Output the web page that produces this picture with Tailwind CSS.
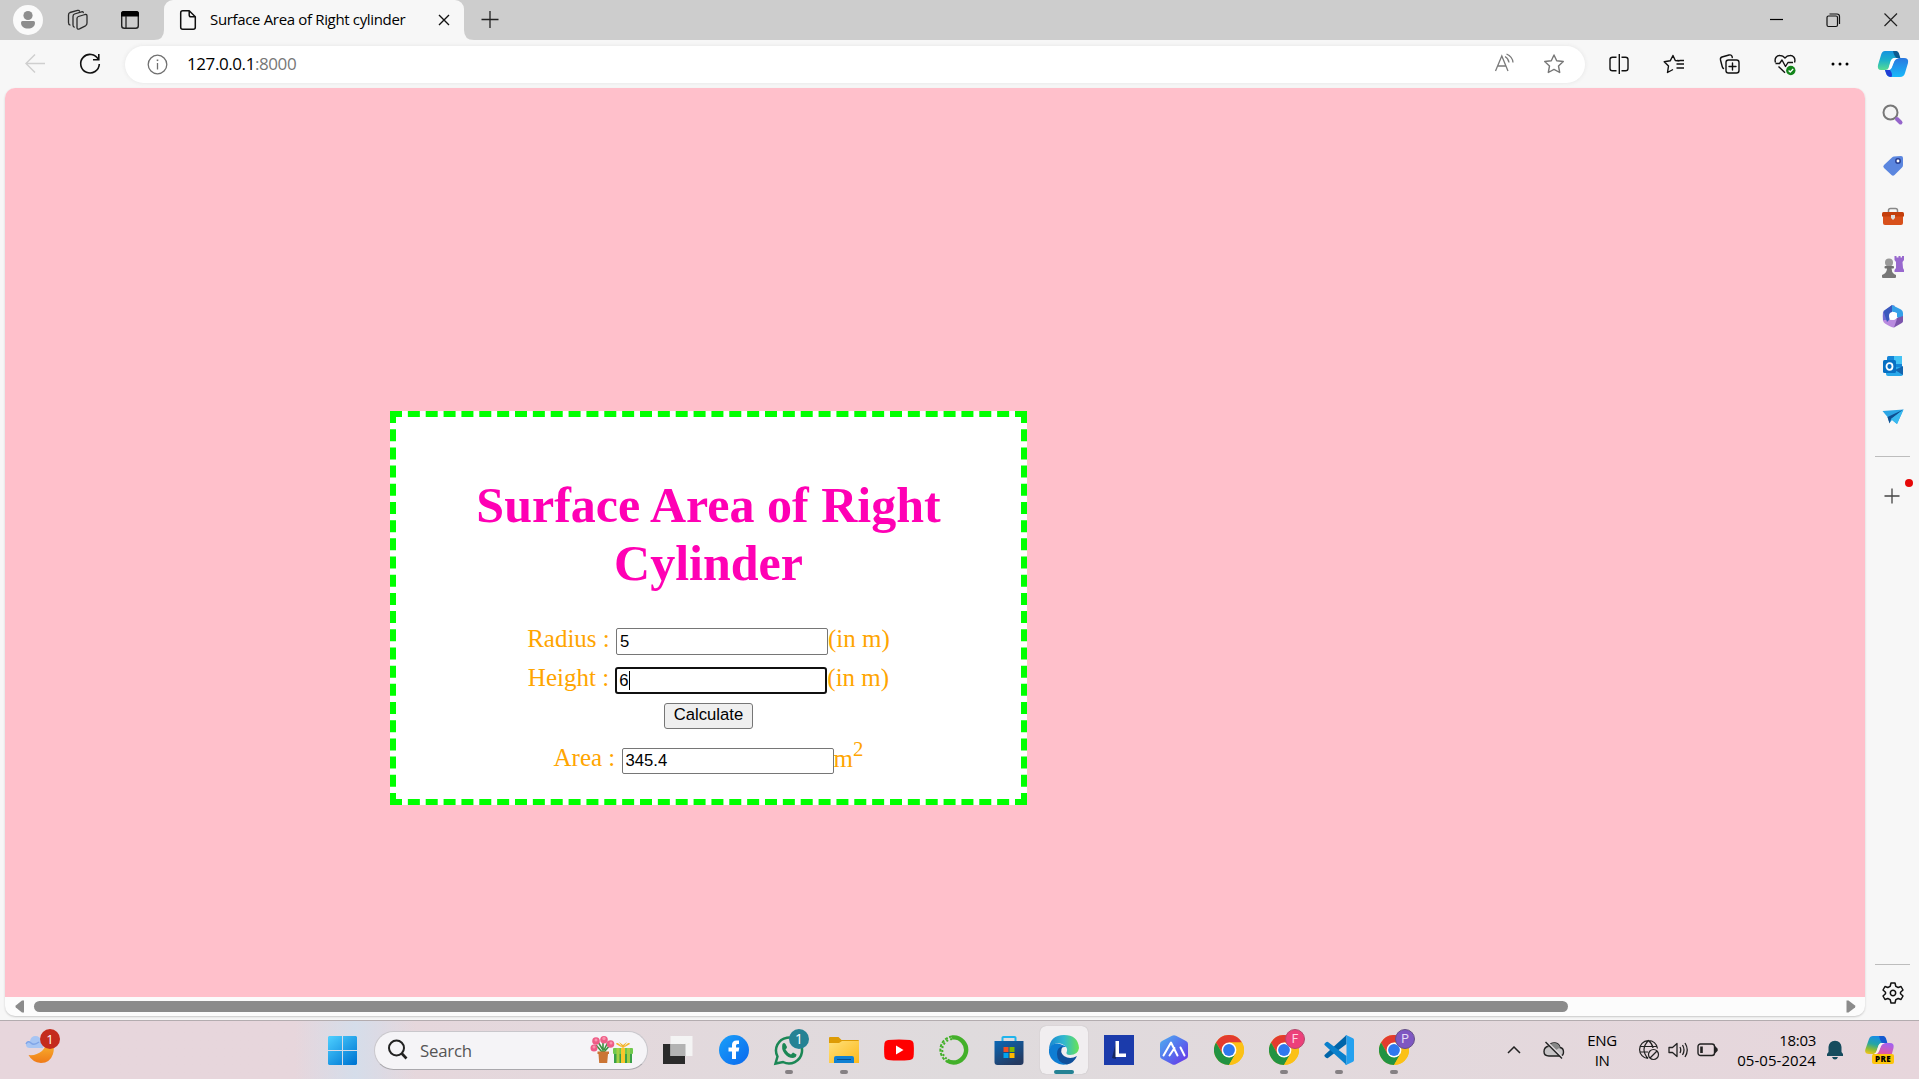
<!DOCTYPE html>
<html lang="en">
<head>
<meta charset="utf-8">
<title>Surface Area of Right cylinder</title>
<script src="https://cdn.jsdelivr.net/npm/@tailwindcss/browser@4"></script>
</head>
<body class="w-[1919px] h-[1079px] overflow-hidden flex flex-col bg-[#f7f7f7] font-['Open_Sans','Noto_Sans',sans-serif] text-black">
<svg class="absolute w-0 h-0" aria-hidden="true">
  <defs>
    <symbol id="chrome" viewBox="-15 -15 30 30">
      <circle r="15" fill="#fbc116"/>
      <path d="M-13 -7.5A15 15 0 0 1 13 -7.5H0L-6.5 3.8Z" fill="#e33b2e"/>
      <path d="M-13 -7.5A15 15 0 0 0 0 15L6.5 3.8L-6.5 3.8Z" fill="#229342"/>
      <path d="M13 -7.5H0V7.5L6.5 3.8L0 15A15 15 0 0 0 13 -7.5Z" fill="#fbc116"/>
      <circle r="7.4" fill="#fff"/><circle r="5.9" fill="#2f78ee"/>
    </symbol>
  </defs>
</svg>

<!-- Tab strip -->
<header class="h-10 shrink-0 bg-[#cdcdcd] flex items-center">
  <div class="w-14 flex justify-center"><svg width="30" height="30" viewBox="-15 -15 30 30"><circle r="15" fill="#fafafa"/><circle cy="-4.5" r="4.6" fill="#8e8e8e"/><path d="M-7 2.5Q-7 1 -5.500 1H5.500Q7 1 7 2.500C7 6.500 4 8.500 0 8.500S-7 6.500 -7 2.500Z" fill="#8e8e8e"/></svg></div>
  <div class="w-11 flex justify-center"><svg width="24" height="24" viewBox="-12 -12 24 24" fill="none" stroke="#2b2b2b" stroke-width="1.300" stroke-linejoin="round" stroke-linecap="round"><path d="M-1 -1.500Q-1 -3 .5 -3.500L7 -5.500Q9 -6 9 -4V3Q9 5 7.500 5.800L1.500 8.800Q-1 9.800 -1 7.500Z"/><path d="M-3.800 7.200Q-5 6.800 -5 5V-3.500Q-5 -5.500 -3.500 -6L3.500 -8.200Q5 -8.600 5.300 -7.500"/><path d="M-8 5Q-9.500 4.500 -9.500 2.500V-5Q-9.500 -7 -8 -7.500L-.5 -9.600Q1.200 -10 1.500 -8.800"/></svg></div>
  <div class="w-[60px] flex justify-center"><svg width="20" height="20" viewBox="-10 -10 20 20"><rect x="-8.300" y="-8.300" width="16.600" height="16.600" rx="2.500" fill="none" stroke="#222" stroke-width="1.400"/><path d="M-9 -3.500V-6.500Q-9 -9 -6.500 -9H6.500Q9 -9 9 -6.500V-3.500Z"/><path d="M-4 -4V8" stroke="#222" stroke-width="1.300"/></svg></div>
  <div class="relative ml-[4px] w-[300px] h-10 bg-[#f7f7f7] rounded-t-[9px] flex items-center">
    <svg class="absolute -left-2.5 bottom-0" width="10" height="10"><path d="M10 0V10H0Q10 10 10 0Z" fill="#f7f7f7"/></svg>
    <svg class="absolute -right-2.5 bottom-0" width="10" height="10"><path d="M0 0V10H10Q0 10 0 0Z" fill="#f7f7f7"/></svg>
    <svg class="ml-[15px]" width="18" height="22" viewBox="0 0 18 22" fill="none" stroke="#111" stroke-width="1.500" stroke-linejoin="round"><path d="M3.500 1.700H10.200L16.300 7.800V18.300Q16.300 20.300 14.300 20.300H3.700Q1.700 20.300 1.700 18.300V3.700Q1.700 1.700 3.700 1.700ZM10.200 1.700V6Q10.200 7.800 12 7.800H16.300"/></svg>
    <span class="ml-[13px] -mt-[2px] w-[228px] text-[15px] tracking-[-0.340px] whitespace-nowrap">Surface Area of Right cylinder</span>
    <svg width="12" height="12" viewBox="-6 -6 12 12" stroke="#111" stroke-width="1.400"><path d="M-5 -5L5 5M5 -5L-5 5"/></svg>
  </div>
  <svg class="ml-[17px]" width="18" height="18" viewBox="-9 -9 18 18" stroke="#222" stroke-width="1.300"><path d="M-8.500 -.5H8.500M0 -9V8"/></svg>
  <div class="ml-auto flex items-center">
    <div class="w-[57px] flex justify-center"><svg width="14" height="14"><path d="M0 6.500H13" stroke="#000" stroke-width="1.200"/></svg></div>
    <div class="w-[57px] flex justify-center"><svg width="15" height="15" fill="none" stroke="#111" stroke-width="1.200"><rect x="1" y="3" width="10.500" height="10.500" rx="1.500"/><path d="M3.500 1H11Q13.500 1 13.500 3.500V11"/></svg></div>
    <div class="w-[57px] flex justify-center"><svg width="14" height="14" stroke="#222" stroke-width="1.200"><path d="M.5 .5L13 13M13 .5L.5 13"/></svg></div>
  </div>
</header>

<!-- Toolbar -->
<div class="h-12 shrink-0 flex items-center">
  <div class="w-[69px] flex justify-center"><svg width="22" height="22" viewBox="-11 -11 22 22" fill="none" stroke="#cfcfcf" stroke-width="1.400"><path d="M10 -.5H-9M0 -9.500L-9 -.5L0 8.500"/></svg></div>
  <div class="w-[42px] flex justify-center"><svg width="24" height="24" viewBox="-12 -12 24 24" fill="none" stroke="#111" stroke-width="1.600"><path d="M8.300 -4.500A9.300 9.300 0 1 0 9.300 0M8.800 -10V-4.300H3"/></svg></div>
  <div class="ml-[14px] w-[1460px] h-[37px] rounded-full bg-white shadow-[0_0_4px_#e4e4e4] flex items-center">
    <svg class="ml-[22px]" width="21" height="21" viewBox="-10.500 -10.500 21 21" fill="none" stroke="#707070" stroke-width="1.300"><circle r="9.300"/><path d="M0 -1.500V5"/><path d="M0 -5V-3.400" stroke-width="1.600"/></svg>
    <span class="ml-[19px] text-[17px] tracking-[-0.420px]">127.0.0.1<span class="text-[#777]">:8000</span></span>
    <svg class="ml-auto" width="22" height="22" viewBox="0 0 22 22" fill="none" stroke="#7a7a7a" stroke-width="1.300"><path d="M1.500 18L7.800 3L14 18M3.800 13H11.700"/><path d="M11 3.500Q14.500 5.500 15 9.500M12.500 1Q18.500 3.500 19 9.500" /></svg>
    <svg class="ml-[27px] mr-[20px]" width="22" height="22" viewBox="-11 -11 22 22" fill="none" stroke="#777" stroke-width="1.400" stroke-linejoin="round"><path d="M0 -9L2.700 -3.300L9.300 -2.500L4.500 2L5.700 8.500L0 5.400L-5.700 8.500L-4.500 2L-9.300 -2.500L-2.700 -3.300Z"/></svg>
  </div>
  <div class="ml-[7px] flex items-center">
    <div class="w-[54px] flex justify-center"><svg width="22" height="22" viewBox="-11 -11 22 22" fill="none" stroke="#111" stroke-width="1.400"><path d="M-2.500 -6.800H-6.500Q-9 -6.800 -9 -4.500V4.500Q-9 6.800 -6.500 6.800H-2.500M2.500 -6.800H6.500Q9 -6.800 9 -4.500V4.500Q9 6.800 6.500 6.800H2.500M.3 -10V10"/></svg></div>
    <div class="w-[56px] flex justify-center"><svg width="22" height="22" viewBox="-11 -11 22 22" fill="none" stroke="#111" stroke-width="1.400" stroke-linejoin="round"><path d="M5.500 -3L1.300 -3.500L-1 -8.500L-3.800 -3.200L-9.800 -2.300L-5.500 2L-6.500 8.500L-1 5.500M3 -3.500L5.500 -3.200M2.500 0H10M2.500 4H10M5.500 -3.500H10"/></svg></div>
    <div class="w-[55px] flex justify-center"><svg width="24" height="24" viewBox="-12 -12 24 24" fill="none" stroke="#111" stroke-width="1.400" stroke-linecap="round"><rect x="-4" y="-4" width="13" height="13" rx="2.500"/><path d="M2.500 -1V6M-1 2.500H6M-6.500 4.500Q-7.500 4 -7.800 2.500L-9.500 -4Q-10 -6.200 -8 -7L-1 -9Q1.300 -9.600 2 -7.800L2.300 -6.500"/></svg></div>
    <div class="w-[55px] flex justify-center"><svg width="24" height="24" viewBox="-12 -12 24 24" fill="none" stroke="#111" stroke-width="1.400" stroke-linejoin="round"><path d="M-9.500 -1.500C-11 -6 -8 -8.700 -5 -8.500Q-2 -8.500 0 -6Q2 -8.500 5 -8.500C8 -8.700 11 -6 9.500 -1.500M-9.500 -.5H-5.500L-3 -4L.5 2.500L3 -1.500H8M-6.500 2.500L0 8.700"/><circle cx="5.800" cy="6.500" r="4.700" fill="#13851b" stroke="none"/><path d="M3.600 6.500L5.300 8L8.200 5" stroke="#fff" stroke-width="1.300"/></svg></div>
    <div class="w-[55px] flex justify-center"><svg width="18" height="6" viewBox="-9 -3 18 6"><circle cx="-7" r="1.500"/><circle r="1.500"/><circle cx="7" r="1.500"/></svg></div>
  </div>
  <div class="ml-[10px]"><svg width="32" height="28" viewBox="0 0 32 28">
    <defs>
      <linearGradient id="ca" x1="0" y1="0" x2="0" y2="1"><stop offset="0" stop-color="#1593df"/><stop offset=".5" stop-color="#1eb2c9"/><stop offset="1" stop-color="#58dc92"/></linearGradient>
      <linearGradient id="cb" x1="0" y1="0" x2="0" y2="1"><stop offset="0" stop-color="#2a78df"/><stop offset="1" stop-color="#19b9fa"/></linearGradient>
    </defs>
    <path d="M8 1H18Q21 1 22 5L23 8H18Q14 8 13 13L11.500 18Q11 20 8 20H4Q0 20 1 15L4 5Q5 1 8 1Z" fill="url(#ca)"/>
    <path d="M16 1H19Q21.500 1 22.300 4.500L23.300 8H19.500Q17 6 16 1Z" fill="#0c5a8f"/>
    <path d="M8 20H11Q14 20 15 16L17 11Q18 8 21 8H27Q32 8 31 13L28 23Q27 27 23 27H14Q10 27 9 23Z" fill="url(#cb)"/>
    <path d="M8 20H13Q16 24 14.500 27Q10 27 9 23Z" fill="#213dd4"/>
    <path d="M18 8H22Q18 9 17 12L15 17Q14 20 11 20Q12 19 12.500 16L14 11Q15 8 18 8Z" fill="#fff"/>
  </svg></div>
</div>

<!-- Page and side bar -->
<div class="h-[932px] shrink-0 flex">
  <main class="ml-[5px] w-[1860px] h-[928px] rounded-[10px] overflow-hidden bg-[#fcfcfc] shadow-[0_1px_2px_#c8c8c8] flex flex-col">
    <div class="h-[909px] bg-[#ffc0cb] pt-[323px] pl-[385px] font-['Liberation_Serif',serif] text-[25px] leading-[29px] text-[#ffa500]">
      <section class="w-[637px] h-[394px] bg-white border-6 border-dashed border-[#00ff00] flex flex-col items-center">
        <h1 class="mt-[59px] h-[116px] text-center font-bold text-[50px] leading-[58px] text-[#ff00b4] w-[500px]">Surface Area of Right Cylinder</h1>
        <div class="mt-[36px] h-[27px] flex items-center whitespace-pre"><span class="-mt-1.5">Radius : </span><input class="w-[212px] h-[27px] border border-[#767676] rounded-[2px] bg-white px-[3px] font-['Liberation_Sans',sans-serif] text-[16.670px] text-black" value="5"><span class="-mt-1.5">(in m)</span></div>
        <div class="mt-[12px] h-[27px] flex items-center whitespace-pre"><span class="-mt-1.5">Height : </span><div class="w-[212px] h-[27px] border-2 border-[#101010] rounded-[3px] bg-white px-[2px] font-['Liberation_Sans',sans-serif] text-[16.670px] leading-[23px] text-black flex items-center"><span>6</span><i class="w-px h-[19px] bg-black"></i></div><span class="-mt-1.5">(in m)</span></div>
        <button class="mt-[9px] w-[89px] h-[26px] border border-[#767676] rounded-[3px] bg-[#efefef] font-['Liberation_Sans',sans-serif] text-[16.670px] leading-[22px] pb-[2px] text-black">Calculate</button>
        <div class="mt-[19px] h-[26px] flex items-center whitespace-pre"><span class="-mt-[7px]">Area : </span><input class="w-[212px] h-[26px] border border-[#767676] rounded-[2px] bg-white px-[3px] pb-[2px] font-['Liberation_Sans',sans-serif] text-[16.670px] text-black" value="345.4"><span class="-mt-[6px]">m<sup class="text-[20.800px]">2</sup></span></div>
      </section>
    </div>
    <div class="h-[19px] flex items-center">
      <svg class="ml-[10px]" width="10" height="13"><path d="M9 .5V12.500H7L.8 7.500Q0 6.500 .8 5.500L7 .5Z" fill="#8b8b8b"/></svg>
      <div class="ml-[9px] w-[1534px] h-[11px] rounded-full bg-[#8b8b8b]"></div>
      <svg class="ml-auto mr-[9px]" width="10" height="13"><path d="M.5 .5V12.500H2.500L9 7.500Q9.800 6.500 9 5.500L2.500 .5Z" fill="#8b8b8b"/></svg>
    </div>
  </main>

  <aside class="ml-[10px] w-[35px] flex flex-col items-center">
    <div class="mt-px h-[51px] flex items-center"><svg width="22" height="22" viewBox="0 0 22 22"><circle cx="8.500" cy="8.500" r="7" fill="#f4f4f4" stroke="#777" stroke-width="2"/><path d="M15 15L18.500 18.500" stroke="#9565cb" stroke-width="4" stroke-linecap="round"/></svg></div>
    <div class="h-[51px] flex items-center"><svg width="22" height="22" viewBox="0 0 22 22"><path d="M12 1.500L19 1Q21 1 21 3V10Q21 11.500 20 12.500L12.500 20Q11 21.500 9.500 20L2 13Q.5 11.500 2 10L10 2.500Q11 1.500 12 1.500Z" fill="#5b86df"/><circle cx="16" cy="6" r="2.200" fill="#fff" stroke="#293f91" stroke-width="1.500"/></svg></div>
    <div class="h-[51px] flex items-center"><svg width="24" height="20" viewBox="0 0 24 20"><path d="M7.500 5V3.500Q7.500 1.500 9.500 1.500H14.500Q16.500 1.500 16.500 3.500V5" fill="none" stroke="#888" stroke-width="1.500"/><path d="M2 9H22V16Q22 18 20 18H4Q2 18 2 16Z" fill="#d8501b"/><path d="M1 6.500Q1 5 2.500 5H21.500Q23 5 23 6.500V9.500H1Z" fill="#c43f0d"/><path d="M10 8H14V11L12 13L10 11Z" fill="#ddd"/></svg></div>
    <div class="h-[49px] flex items-center"><svg width="24" height="24" viewBox="0 0 24 24"><path d="M13.500 1H15.500V2.500H17.500V1H19.500V2.500H21V1H23V5L21.500 7L22 13L23 15V17H13.500V15L15 13V7L13.500 5Z" fill="#9868ce"/><path d="M6 13H10.500Q10.500 17 13 19L15 20V22Q15 23 14 23H2Q1 23 1 22V20L3 19Q6 17 6 13Z" fill="#777"/><circle cx="8" cy="7.500" r="4" fill="#999"/><rect x="3.500" y="11" width="9.500" height="2.500" rx="1" fill="#707070"/></svg></div>
    <div class="h-[50px] flex items-center"><svg width="22" height="24" viewBox="-11 -12 22 24"><path d="M-10 -4L-2 -10Q0 -11.500 2 -10L-3.500 -3L-4 3L-2 5L-10 5Q-10.500 0 -10 -4Z" fill="#6e6bd2"/><path d="M-1 -11L8 -6.500Q10 -5.500 10 -3V6L4 1V-3L-3 -5Z" fill="#35a0e8"/><path d="M10 5Q10 6.500 8 7.500L1 11.500L-4 7L4 2L10 0Z" fill="#7c54ac"/><path d="M-10 4L-3 4L4 3L1 11.500Q-1 12 -8 7.500Q-10 6 -10 4Z" fill="#b98adf"/><path d="M-9.500 -5L-1 -11V-4L-4 4L-6 6Z" fill="#3a58bd"/><circle r="4" fill="#fff"/></svg></div>
    <div class="h-[50px] flex items-center"><svg width="22" height="22" viewBox="0 0 22 22"><rect x="5" y="1" width="15" height="12" rx="1.500" fill="#1485d8"/><rect x="12" y="1" width="8" height="8" fill="#43c3f5"/><path d="M4 12H21V19Q21 21 19 21H6Q4 21 4 19Z" fill="#29a8ea"/><path d="M21 11V20L13 15Z" fill="#1464ae"/><rect x="1" y="5" width="13" height="13" rx="1.500" fill="#0870c3"/><ellipse cx="7.500" cy="11.500" rx="3" ry="3.300" fill="none" stroke="#fff" stroke-width="1.800"/></svg></div>
    <div class="h-[50px] flex items-center"><svg width="22" height="18" viewBox="0 0 22 18"><path d="M.5 4L21.500 2.500L15 17L10 13L7.500 16L5.500 10Z" fill="#2ba5e5"/><path d="M21.500 2.500L5.500 10L7.500 16.500L9 12Z" fill="#104f91"/><path d="M21.500 2.500L9 12L15 17Z" fill="#39b9ef"/></svg></div>
    <div class="mt-[15px] h-px w-[35px] shrink-0 bg-[#bdbdbd]"></div>
    <div class="relative mt-[31px] mr-px"><svg width="16" height="16" viewBox="-8 -8 16 16" stroke="#444" stroke-width="1.300"><path d="M-7.500 0H7.500M0 -7.500V7.500"/></svg><i class="absolute left-[21px] -top-[9px] w-2 h-2 rounded-full bg-[#e60808]"></i></div>
    <div class="mt-auto h-px w-[35px] shrink-0 bg-[#bdbdbd]"></div>
    <svg class="mt-[16px] mb-[15px] shrink-0" width="24" height="24" viewBox="-12 -12 24 24" fill="none" stroke="#111" stroke-width="1.500" stroke-linejoin="round"><path d="M-2 -10H2L2.800 -6.700L5.200 -5.500L8 -6.500L10 -3L7.500 -.8V.8L10 3L8 6.500L5.200 5.500L2.800 6.700L2 10H-2L-2.800 6.700L-5.200 5.500L-8 6.500L-10 3L-7.500 .8V-.8L-10 -3L-8 -6.500L-5.200 -5.500L-2.800 -6.700Z"/><circle r="2.700"/></svg>
  </aside>
</div>

<!-- Taskbar -->
<footer class="h-[59px] shrink-0 border-t border-[#b3acaf] bg-linear-to-r from-[#e7d6dc] from-15% via-[#dfdbdd] via-50% to-[#e7d6dc] flex items-center">
  <div class="relative ml-[25px] -mt-[8px] w-[36px] h-[34px]">
    <svg width="36" height="36" viewBox="0 0 36 36"><defs><linearGradient id="mo" x1="0" y1="0" x2="0" y2="1"><stop offset="0" stop-color="#f9b730"/><stop offset="1" stop-color="#ef7a18"/></linearGradient></defs><path d="M27 13Q30 18 28 25Q25 34 16 34Q7 33 3.500 26Q11 27 17 22Q21 18 21 13Z" fill="url(#mo)"/><path d="M5 19Q1 19 1 15.500T5 12Q6 7 10.500 7T16 12Q18 14 18 19Z" fill="#a7c5f3"/><path d="M1 15Q3 11 6 14T14 13" stroke="#7fa5e8" stroke-width="1.500" fill="none"/></svg>
    <span class="absolute left-[15px] top-0 w-5 h-5 rounded-full bg-[#c42b1c] text-white text-[13px] leading-5 text-center">1</span>
  </div>
  <div class="ml-[234px] w-[120px] h-[58px] -mr-[87px] pl-[33px] flex items-center bg-linear-to-r from-transparent via-[#d5ddea] to-transparent">
    <svg class="shrink-0" width="29" height="29"><defs><linearGradient id="wi" gradientUnits="userSpaceOnUse" x1="0" y1="0" x2="24" y2="29"><stop offset="0" stop-color="#4ed0ff"/><stop offset="1" stop-color="#0078d4"/></linearGradient></defs><path d="M1 0H14V14H0V1ZM15 0H28L29 1V14H15ZM0 15H14V29H1L0 28ZM15 15H29V28L28 29H15Z" fill="url(#wi)"/></svg>
  </div>
  <div class="relative ml-[46px] w-[274px] h-[39px] rounded-full border border-[#c9c7cc] border-b-[#aaa8ad] bg-[#f5f4f7] flex items-center">
    <svg class="ml-[12px]" width="22" height="22" fill="none" stroke="#222" stroke-width="2"><circle cx="9.500" cy="9" r="7.500"/><path d="M14.800 14.500L19.500 19.500" stroke-width="2.600"/></svg>
    <span class="ml-[11px] mt-px text-[16.800px] tracking-[-0.200px] text-[#555]">Search</span>
    <svg class="ml-auto mr-[13px]" width="44" height="28" viewBox="0 0 44 28"><path d="M12 16L6 9M13 16V5M14 16L21 8M13 14L8 6M14 14L18 6" stroke="#3d9140" stroke-width="1.600"/><g fill="#ee5c86"><circle cx="6" cy="5" r="3.800"/><circle cx="14" cy="3.800" r="3.800"/><circle cx="20.500" cy="8" r="3.800"/><circle cx="4" cy="12" r="3.500"/></g><g fill="#f892ad"><circle cx="6" cy="4" r="1.500"/><circle cx="14" cy="2.500" r="1.700"/><circle cx="21" cy="7" r="1.500"/><circle cx="4" cy="11" r="1.500"/></g><path d="M7.500 15.500H19V18H18L17.200 27H9.200L8.500 18H7.500Z" fill="#cb7535"/><rect x="23" y="12" width="20" height="6" rx="1" fill="#70c94d"/><path d="M24 18H42V27H24Z" fill="#38a047"/><path d="M26.500 12H29.500V27H26.500ZM37 12H40V27H37Z" fill="#a5cf45"/><path d="M31 12H35V27H31Z" fill="#f9c52c"/><path d="M33 12L26 8Q27 5 33 12Q39 5 40 8ZM33 12L29 6L33 9L37 6Z" fill="#f4b223"/></svg>
  </div>
  <div class="ml-[2px] flex items-center">
    <div class="w-[55px] flex justify-center"><svg width="30" height="30"><path d="M0 9H22V29H0Z" fill="#2b2b2b"/><rect x="7.500" y="1" width="22" height="20" fill="#f4f4f4"/><path d="M7.500 9H22.500V21H7.500Z" fill="#b3b3b3"/></svg></div>
    <!-- Facebook -->
    <div class="ml-px w-[55px] flex justify-center"><svg width="30" height="30"><defs><linearGradient id="fb" x1="0" y1="0" x2="1" y2="1"><stop offset="0" stop-color="#1aa0f9"/><stop offset="1" stop-color="#0a68ee"/></linearGradient></defs><circle cx="15" cy="15" r="15" fill="url(#fb)"/><path d="M13 24V16.500H9.500V12.500H13V10Q13 5.500 17.500 5.500H20V9H18.500Q17 9 17 10.500V12.500H20.300L19.600 16.500H17V24Z" fill="#fff"/></svg></div>
    <!-- WhatsApp -->
    <div class="relative w-[55px] h-[48px] flex justify-center items-center"><svg width="32" height="32" viewBox="0 0 32 32" fill="none" stroke="#1b8755" stroke-width="2.500"><path d="M2.500 29.500L4.500 22.500A13 13 0 1 1 10 28Z"/><path d="M9.500 10Q11 8 12.500 10L14 13Q14 14 12.500 15.500Q14.500 19 18 20.500L20 18.500L23.500 20.500Q23.500 23.500 20 24Q15 24 11.500 19.500Q8 15 9.500 10Z" fill="#1b8755" stroke="none"/></svg><span class="absolute left-[28px] top-[3px] w-5 h-5 rounded-full bg-[#258294] text-white text-[14px] leading-5 text-center">1</span><i class="absolute bottom-0 w-2 h-1 rounded-full bg-[#858083]"></i></div>
    <!-- File Explorer -->
    <div class="relative w-[55px] h-[48px] flex justify-center items-center"><svg width="30" height="28"><defs><linearGradient id="fo" x1="0" y1="0" x2="1" y2="1"><stop offset="0" stop-color="#ffe07a"/><stop offset="1" stop-color="#fcb91b"/></linearGradient></defs><path d="M0 2Q0 1 1 1H9.500L12.500 4H29Q30 4 30 5V13H0Z" fill="#dd9b05"/><path d="M0 7H10L13 5H30V27H0Z" fill="url(#fo)"/><path d="M5 27V22Q5 20 7 20H23Q25 20 25 22V27Z" fill="#1080d2"/><path d="M8 23.500H22" stroke="#084f8d"/></svg><i class="absolute bottom-0 w-2 h-1 rounded-full bg-[#858083]"></i></div>
    <!-- YouTube -->
    <div class="w-[55px] flex justify-center"><svg width="30" height="22"><path d="M4 1Q15 0 26 1Q29 1.300 29.500 4Q30.300 11 29.500 18Q29 20.700 26 21Q15 22 4 21Q1 20.700 .5 18Q-.3 11 .5 4Q1 1.300 4 1Z" fill="#f00"/><path d="M12 6.500L19.500 11L12 15.500Z" fill="#fff"/></svg></div>
    <!-- Anaconda -->
    <div class="w-[55px] flex justify-center"><svg width="30" height="30" viewBox="-15 -15 30 30" fill="none" stroke="#43b02a"><path d="M-2 -12.500A12.500 12.500 0 1 1 -7 10.500" stroke-width="4.400"/><path d="M-2 -13.500A13.500 13.500 0 0 0 -7 11.500" stroke-width="2" stroke-dasharray="3 1.500"/><path d="M-2 -11A11 11 0 0 0 -7 9" stroke-width="2" stroke-dasharray="2 2"/></svg></div>
    <!-- Store -->
    <div class="w-[55px] flex justify-center"><svg width="30" height="30"><defs><linearGradient id="st" x1="0" y1="0" x2=".6" y2="1"><stop offset="0" stop-color="#0a67b5"/><stop offset="1" stop-color="#243a61"/></linearGradient></defs><path d="M8.500 8V2.500Q8.500 2 9.500 2H20.500Q21.500 2 21.500 2.500V8" fill="none" stroke="#20b4ec" stroke-width="2"/><path d="M.5 6H29.500V27Q29.500 30 26.500 30H3.500Q.5 30 .5 27Z" fill="url(#st)"/><path d="M9.500 12H14.500V17H9.500Z" fill="#f25022"/><path d="M15.500 12H20.500V17H15.500Z" fill="#7fba00"/><path d="M9.500 18H14.500V23H9.500Z" fill="#00a4ef"/><path d="M15.500 18H20.500V23H15.500Z" fill="#ffb900"/></svg></div>
    <!-- Edge, the active window -->
    <div class="w-[55px] flex justify-center"><div class="relative w-12 h-12 rounded-md bg-[#f1eef0] shadow-[0_0_1px_#aaa] flex justify-center items-center"><svg width="30" height="30" viewBox="0 0 30 30"><defs><linearGradient id="ea" x1="0" y1=".5" x2="1" y2=".5"><stop offset="0" stop-color="#1b87d2"/><stop offset=".5" stop-color="#30b8cf"/><stop offset="1" stop-color="#68e354"/></linearGradient></defs><path d="M0 14Q1 0 15 0Q29 0 30 13Q29 20 21 20Q16 20 18 16Q19 12 13 9Q6 6 0 14Z" fill="url(#ea)"/><path d="M0 14Q4 7 11 9Q17 11 17 12Q10 11 9 18Q9 26 19 29Q12 31 6 27Q-1 22 0 14Z" fill="#0e7dd3"/><path d="M8 19Q8 12 14 11Q10 17 15 21Q21 25 28 21Q25 28 18 29.500Q8 28 8 19Z" fill="#10509b"/></svg><i class="absolute bottom-0 w-5 h-1 rounded-full bg-[#258294]"></i></div></div>
    <!-- L -->
    <div class="w-[55px] flex justify-center"><svg width="30" height="30"><rect width="30" height="30" fill="#1b3bab"/><path d="M12 7L8 23L12 24Z" fill="#14265f"/><path d="M11.500 6H15V18.500H22V22H11.500Z" fill="#fff"/></svg></div>
    <!-- Hexagon -->
    <div class="w-[55px] flex justify-center"><svg width="28" height="30"><defs><linearGradient id="hx" x1="0" y1="0" x2="1" y2="1"><stop offset="0" stop-color="#4fb0ef"/><stop offset=".5" stop-color="#5571ee"/><stop offset="1" stop-color="#6c2ee6"/></linearGradient></defs><path d="M12 .7Q14 -.3 16 .7L26 6Q28 7 28 9V21Q28 23 26 24L16 29.300Q14 30.300 12 29.300L2 24Q0 23 0 21V9Q0 7 2 6Z" fill="url(#hx)"/><path d="M3.500 20.500L11 7.500L17.500 20.500M9.500 20.500L14.500 13M20.500 12.500L24.500 20.500" fill="none" stroke="#fff" stroke-width="2" stroke-linecap="round" stroke-linejoin="round"/></svg></div>
    <div class="w-[55px] flex justify-center"><svg width="30" height="30"><use href="#chrome"/></svg></div>
    <div class="relative w-[55px] h-[48px] flex justify-center items-center"><svg width="30" height="30"><use href="#chrome"/></svg><span class="absolute left-[29px] top-[3px] w-5 h-5 rounded-full bg-[#ec407a] border border-[#b2496c] text-[#ffd5e2] text-[12px] leading-[18px] text-center font-['Roboto',sans-serif]">F</span><i class="absolute bottom-0 w-2 h-1 rounded-full bg-[#858083]"></i></div>
    <!-- VS Code -->
    <div class="relative w-[55px] h-[48px] flex justify-center items-center"><svg width="30" height="30"><path d="M22.500 0V9L4 23Q3 23.500 2 22.700L.5 21.300Q0 20.500 .8 19.800Z" fill="#0065a9"/><path d="M22.500 30V21L4 7Q3 6.500 2 7.300L.5 8.700Q0 9.500 .8 10.200Z" fill="#0a80cc"/><path d="M22 0L29 3.300Q30 4 30 5V25Q30 26 29 26.700L22 30Q20 29 22.500 28.500V1.500Q21 1 22 0Z" fill="#25a1ef"/></svg><i class="absolute bottom-0 w-2 h-1 rounded-full bg-[#858083]"></i></div>
    <div class="relative w-[55px] h-[48px] flex justify-center items-center"><svg width="30" height="30"><use href="#chrome"/></svg><span class="absolute left-[29px] top-[3px] w-5 h-5 rounded-full bg-[#7e57c2] border border-[#655087] text-[#e5dcf5] text-[12px] leading-[18px] text-center font-['Roboto',sans-serif]">P</span><i class="absolute bottom-0 w-2 h-1 rounded-full bg-[#858083]"></i></div>
  </div>
  <!-- System tray -->
  <div class="ml-auto flex items-center">
    <svg class="mr-[22px]" width="14" height="8" fill="none" stroke="#222" stroke-width="1.500"><path d="M1 7L7 1L13 7"/></svg>
    <svg class="mr-[19px]" width="22" height="18" viewBox="0 0 22 18"><path d="M6 5Q8 1.500 12 2T17 6.500Q20.500 7 20.500 11T17 15H6Q1 15 1 10.500T6 5Z" fill="#c7c4c6" stroke="#222" stroke-width="1.400"/><path d="M6 5Q8 1.500 12 2T17 6.500L13 9Q9 4 3 7Z" fill="#888"/><path d="M3 0L20 17" stroke="#e2dcdf" stroke-width="2"/><path d="M2.500 1L19 17.500" stroke="#222" stroke-width="1.400"/></svg>
    <div class="w-[36px] text-center text-[15px] leading-5 tracking-[-0.400px]">ENG<br>IN</div>
    <svg class="ml-[18px]" width="22" height="22" fill="none" stroke="#222" stroke-width="1.200"><path d="M19.500 9.500A9 9 0 1 0 10 19.500M2 7.500H19M2 13H10M10 19.500Q6 15 6 10.500T10.500 1.500Q14.500 5 15 9"/><circle cx="15.500" cy="15.500" r="5"/><path d="M12 19L19 12"/></svg>
    <svg class="ml-[8px]" width="22" height="18" fill="none" stroke="#222" stroke-width="1.300" stroke-linejoin="round"><path d="M1 6.500H4.500L9 2.500V15.500L4.500 11.500H1ZM12 6Q13.500 9 12 12M14.500 4Q17.500 9 14.500 14M17 2Q21.500 9 17 16"/></svg>
    <svg class="ml-[7px]" width="22" height="14" fill="none" stroke="#222" stroke-width="1.400"><rect x="1" y="1" width="16.500" height="11.500" rx="2.500"/><path d="M18.500 4.500V9L20 7.500V6Z" fill="#222"/><path d="M4.500 3.500V10" stroke-width="2.600"/></svg>
    <div class="ml-[17px] w-[80px] flex flex-col items-end text-[15px] leading-5 whitespace-nowrap"><span class="tracking-[-0.300px]">18:03</span><span class="tracking-[0.050px]">05-05-2024</span></div>
    <svg class="ml-[10px]" width="18" height="20"><path d="M1 16V14L2.500 12V7Q3 1 9 .7Q15 1 15.500 7V12L17 14V16ZM6 17H12Q11 19.500 9 19.500T6 17Z" fill="#164c5e"/></svg>
    <div class="relative ml-[21px] mr-[24px] w-[30px] h-[30px]"><svg width="30" height="26"><defs><linearGradient id="pa" x1=".5" y1="0" x2=".2" y2="1"><stop offset="0" stop-color="#168ce8"/><stop offset=".45" stop-color="#26a6a2"/><stop offset=".75" stop-color="#91bc32"/><stop offset="1" stop-color="#f0c41c"/></linearGradient><linearGradient id="pb" x1=".6" y1="0" x2=".3" y2="1"><stop offset="0" stop-color="#a562ee"/><stop offset=".6" stop-color="#e258a5"/><stop offset="1" stop-color="#f98753"/></linearGradient></defs><path d="M8 1H17Q20 1 21 5L22 8H17Q14 8 13 12L11.500 17Q11 19 8 19H4Q-1 19 .5 14L4 4Q5 1 8 1Z" fill="url(#pa)"/><path d="M14 1H18Q20.500 1 21.500 5L22.300 8H17Q15 6 14 1Z" fill="#1459cf"/><path d="M8 19H11Q13 19 14 16L16 11Q17 8 20 8H25Q29.500 8 28.500 13L26 22Q25 25 22 25H12Q9 25 8 21Z" fill="url(#pb)"/><path d="M17 8H20Q17 9 16 11L14 16Q13 19 11 19H9Q11 18 11.500 16L13 12Q14 8 17 8Z" fill="#fbeef2"/></svg><span class="absolute left-[7px] top-[19px] w-[22px] h-[10px] rounded-[2px] bg-[#fdc50b] text-[8px] leading-[10px] font-extrabold text-center tracking-[0.300px]">PRE</span></div>
  </div>
</footer>
</body>
</html>
